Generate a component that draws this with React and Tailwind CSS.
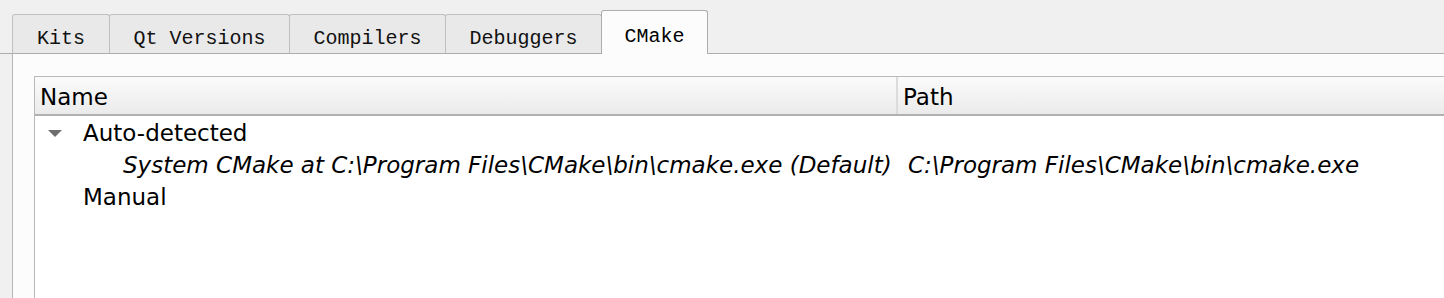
import React from 'react';

const tabs = ['Kits', 'Qt Versions', 'Compilers', 'Debuggers', 'CMake'];
const tabWidths = ['w-[98px]', 'w-[181px]', 'w-[157px]', 'w-[157px]', 'w-[107px]'];

function Tabs() {
  return (
    <div className="flex items-end h-[54px] pl-[12px] border-b border-[#adadad]">
      {tabs.map((t, i) => {
        const active = t === 'CMake';
        return (
          <div
            key={t}
            className={
              active
                ? `${tabWidths[i]} h-[44px] -mb-px -ml-px bg-[#fcfcfc] border border-b-0 border-[#adadad] rounded-t-[3px] flex items-center justify-center pt-[8px] text-[20px] text-black`
                : `${tabWidths[i]} h-[39px] ${i > 0 ? '-ml-px' : ''} bg-[#e9e9e9] border border-b-0 border-[#c0c0c0] rounded-t-[3px] flex items-center justify-center pt-[9px] text-[20px] text-[#111]`
            }
            style={{ fontFamily: '"Liberation Mono", "DejaVu Sans Mono", monospace' }}
          >
            {t}
          </div>
        );
      })}
    </div>
  );
}

function Row({ depth, arrow, italic, name, path }) {
  return (
    <div className="flex h-[32px] items-center pt-[3px]">
      <div className="w-[863px] flex items-center shrink-0">
        <div className={depth === 0 ? 'w-[13px]' : 'w-[53px]'} />
        <div className="w-[35px] flex items-center">
          {arrow && (
            <svg width="14" height="8" viewBox="0 0 14 8">
              <polygon points="0,0 14,0 7,7" fill="#6e6e6e" />
            </svg>
          )}
        </div>
        <span className={`whitespace-nowrap ${italic ? 'italic' : ''}`}>{name}</span>
      </div>
      {path && <span className="pl-[10px] italic whitespace-nowrap">{path}</span>}
    </div>
  );
}

export default function App() {
  return (
    <div className="w-[1444px] h-[298px] bg-[#f0f0f0] overflow-hidden">
      <Tabs />
      <div className="ml-[12px] h-[244px] bg-[#fcfcfc] border-l border-[#b5b5b5] pt-[22px] pl-[21px]">
        <div
          className="h-[300px] bg-white border-l border-t border-[#b9b9b9] text-[23px] text-black"
          style={{ fontFamily: '"DejaVu Sans", "Noto Sans", sans-serif' }}
        >
          <div className="flex h-[39px] bg-gradient-to-b from-[#fbfbfb] to-[#ebebeb] border-b-2 border-[#b1b1b1]">
            <div className="w-[863px] pl-[5px] pt-[3px] flex items-center border-r-2 border-r-[#dcdcdc] leading-none">Name</div>
            <div className="pl-[5px] pt-[3px] flex items-center leading-none">Path</div>
          </div>
          <Row depth={0} arrow name="Auto-detected" />
          <Row
            depth={1}
            italic
            name="System CMake at C:\Program Files\CMake\bin\cmake.exe (Default)"
            path="C:\Program Files\CMake\bin\cmake.exe"
          />
          <Row depth={0} name="Manual" />
        </div>
      </div>
    </div>
  );
}
